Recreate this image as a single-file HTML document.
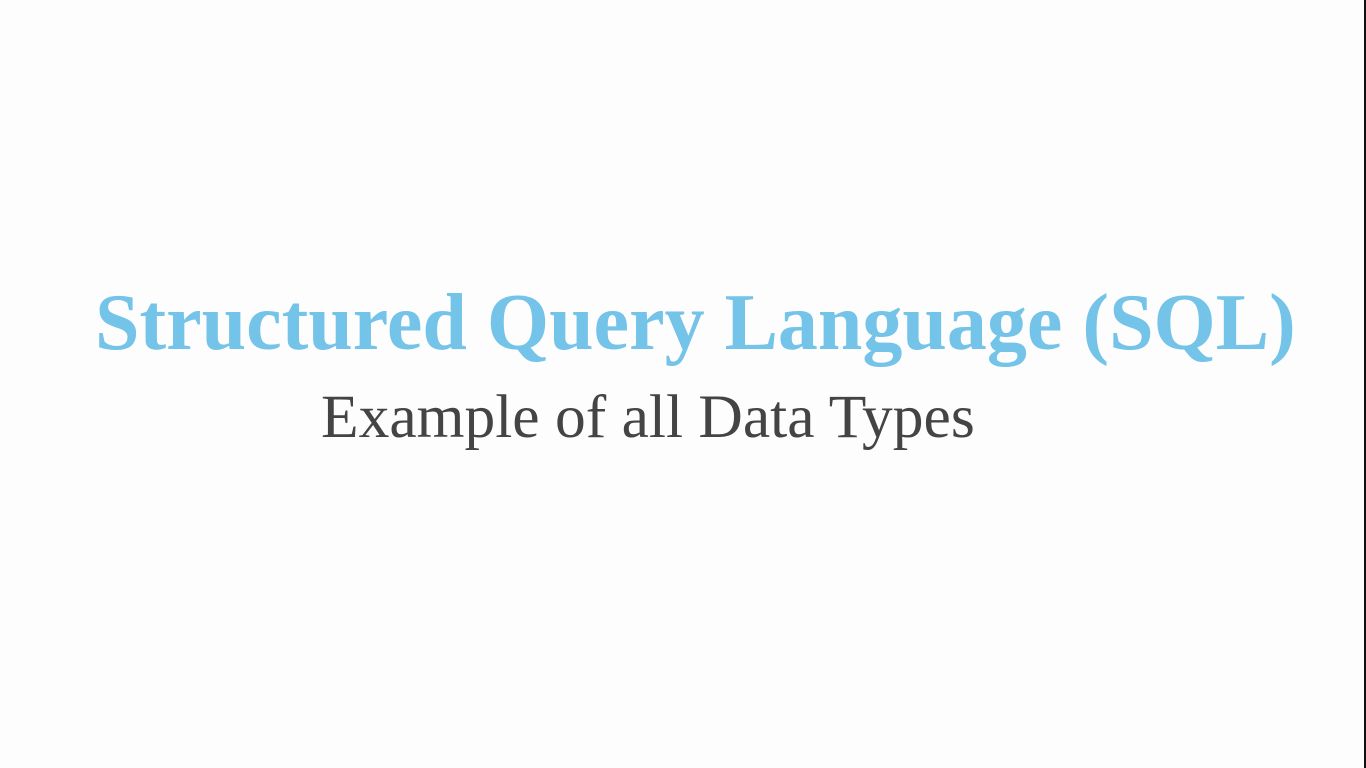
<!DOCTYPE html>
<html><head><style>
html,body{margin:0;padding:0}
body{width:1366px;height:768px;background:#fdfdfd;position:relative;overflow:hidden;font-family:"Liberation Serif",serif}
.t{position:absolute;left:95px;top:283px;font-size:80px;font-weight:bold;color:#74c3e8;white-space:nowrap;line-height:1}
.s{position:absolute;left:321px;top:387px;font-size:61.5px;color:#444;white-space:nowrap;line-height:1}
.e{position:absolute;right:0;top:0;width:2px;height:768px;background:#111}
</style></head><body>
<div class="t">Structured Query Language (SQL)</div>
<div class="s">Example of all Data Types</div>
<div class="e"></div>
</body></html>
